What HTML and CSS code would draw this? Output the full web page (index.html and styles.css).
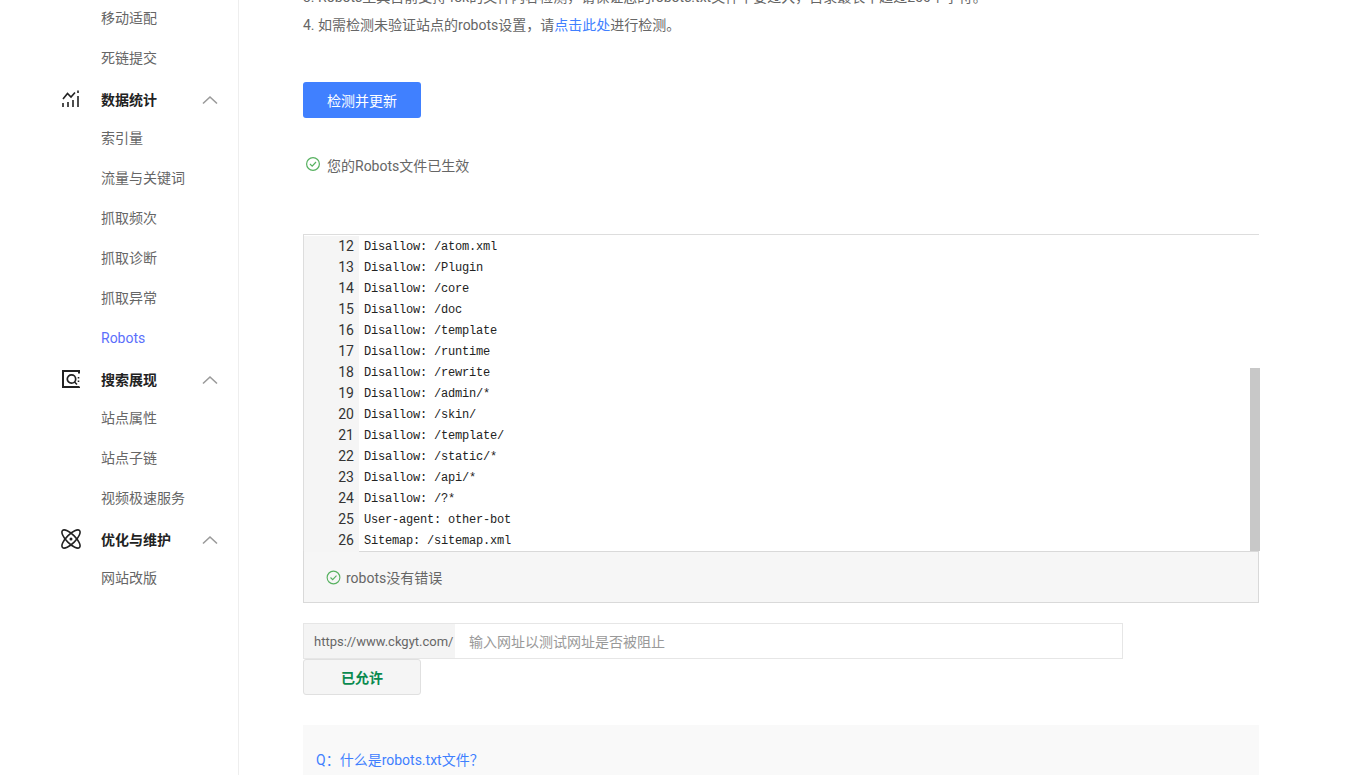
FILE: index.html
```html
<!DOCTYPE html>
<html lang="zh-CN">
<head>
<meta charset="utf-8">
<title>Robots</title>
<link rel="stylesheet" href="styles.css">
</head>
<body>
<div class="page">
  <aside class="sidebar">
    <a class="item">移动适配</a>
    <a class="item">死链提交</a>
    <div class="group">
      <svg class="gicon" width="20" height="20" viewBox="0 0 20 20" fill="none" stroke="#222" stroke-width="1.6"><path d="M2 10 6.500 4.500 10 8l4-4.500"/><path d="M2 18v-4M7 18v-5M12 18v-7M17 18V7M17 4V1.500"/></svg>
      <span class="gname">数据统计</span>
      <svg class="chev" width="16" height="10" viewBox="0 0 16 10" fill="none" stroke="#9a9a9a" stroke-width="1.6"><path d="M1 8.500 8 2l7 6.500"/></svg>
    </div>
    <a class="item">索引量</a>
    <a class="item">流量与关键词</a>
    <a class="item">抓取频次</a>
    <a class="item">抓取诊断</a>
    <a class="item">抓取异常</a>
    <a class="item active">Robots</a>
    <div class="group">
      <svg class="gicon" width="20" height="20" viewBox="0 0 20 20" fill="none" stroke="#222" stroke-width="2"><path d="M18 4.500V2H2v16h16v-.5"/><circle cx="10.500" cy="10" r="4.200" stroke-width="1.700"/><path d="m13.500 13 2.500 2.500M17.500 8v1.500M17.500 11.500V13" stroke-width="1.600"/></svg>
      <span class="gname">搜索展现</span>
      <svg class="chev" width="16" height="10" viewBox="0 0 16 10" fill="none" stroke="#9a9a9a" stroke-width="1.6"><path d="M1 8.500 8 2l7 6.500"/></svg>
    </div>
    <a class="item">站点属性</a>
    <a class="item">站点子链</a>
    <a class="item">视频极速服务</a>
    <div class="group">
      <svg class="gicon" width="20" height="20" viewBox="0 0 20 20" fill="none" stroke="#222" stroke-width="1.600"><ellipse cx="10" cy="10" rx="4.500" ry="12" transform="rotate(45 10 10)"/><ellipse cx="10" cy="10" rx="4.500" ry="12" transform="rotate(-45 10 10)"/><circle cx="10" cy="10" r="1.500" fill="#222" stroke="none"/></svg>
      <span class="gname">优化与维护</span>
      <svg class="chev" width="16" height="10" viewBox="0 0 16 10" fill="none" stroke="#9a9a9a" stroke-width="1.6"><path d="M1 8.500 8 2l7 6.500"/></svg>
    </div>
    <a class="item">网站改版</a>
  </aside>
  <main class="main">
    <p class="note">3. Robots工具目前支持48k的文件内容检测，请保证您的robots.txt文件不要过大，目录最长不超过250个字符。</p>
    <p class="note">4. 如需检测未验证站点的robots设置，请<a class="link">点击此处</a>进行检测。</p>
    <button class="primary">检测并更新</button>
    <div class="status">
      <svg width="16" height="16" viewBox="0 0 16 16" fill="none" stroke="#57b160" stroke-width="1.200"><circle cx="8" cy="8" r="6.400"/><path d="m5 8 2.200 2.200L11 6"/></svg>
      <span>您的Robots文件已生效</span>
    </div>
    <section class="editor">
      <div class="code">
        <div class="gutter">
          <div>12</div><div>13</div><div>14</div><div>15</div><div>16</div><div>17</div><div>18</div><div>19</div><div>20</div><div>21</div><div>22</div><div>23</div><div>24</div><div>25</div><div>26</div>
        </div>
        <pre class="lines">Disallow: /atom.xml
Disallow: /Plugin
Disallow: /core
Disallow: /doc
Disallow: /template
Disallow: /runtime
Disallow: /rewrite
Disallow: /admin/*
Disallow: /skin/
Disallow: /template/
Disallow: /static/*
Disallow: /api/*
Disallow: /?*
User-agent: other-bot
Sitemap: /sitemap.xml</pre>
        <div class="thumb"></div>
      </div>
      <div class="result">
        <svg width="15" height="15" viewBox="0 0 16 16" fill="none" stroke="#57b160" stroke-width="1.200"><circle cx="8" cy="8" r="6.800"/><path d="m4.800 8 2.300 2.300L11.200 6"/></svg>
        <span>robots没有错误</span>
      </div>
    </section>
    <div class="urlrow">
      <span class="prefix">https://www.ckgyt.com/</span>
      <span class="placeholder">输入网址以测试网址是否被阻止</span>
    </div>
    <button class="allowed">已允许</button>
    <section class="faq">
      <a class="q">Q：什么是robots.txt文件？</a>
    </section>
  </main>
</div>
</body>
</html>
```
FILE: styles.css
```css
* { box-sizing: border-box; }
html, body { margin: 0; height: 775px; overflow: hidden; background: #fff; }
body { font-family: Roboto, "Noto Sans CJK SC", sans-serif; font-size: 14px; color: #666; }
.page { display: flex; height: 775px; }
.sidebar { width: 239px; flex: none; border-right: 1px solid #eee; margin-top: -2px; height: 777px; }
.item { display: block; height: 40px; line-height: 40px; padding-left: 101px; color: #666; }
.item.active { color: #5b6ffb; }
.group { display: flex; align-items: center; height: 40px; padding-top: 2px; padding-left: 61px; color: #222; }
.gicon { flex: none; margin-right: 20px; }
.gname { font-weight: 700; font-size: 14px; flex: 1; }
.chev { flex: none; margin-right: 20px; margin-top: 2px; }
.main { width: 956px; margin-left: 64px; flex: none; }
.note { margin: 0; height: 28px; line-height: 28px; white-space: nowrap; }
.note:first-child { margin-top: -17px; }
.link { color: #4080ff; }
.primary { display: block; width: 118px; height: 36px; margin-top: 43px; border: 0; border-radius: 3px; background: #4080ff; color: #fff; font: inherit; }
.status { display: flex; align-items: center; gap: 6px; margin-top: 36px; height: 22px; }
.status svg { margin-left: 2px; margin-top: -3px; }
.editor { margin-top: 58px; width: 956px; }
.code { position: relative; display: flex; height: 317px; border-top: 1px solid #ddd; border-left: 1px solid #ddd; padding-top: 1px; }
.gutter { width: 55px; background: #f5f5f5; color: #333; text-align: right; padding-right: 5px; font-size: 14px; line-height: 21px; height: 316px; }
.lines { margin: 0; padding: 1px 0 0 5px; font-family: "Liberation Mono", monospace; font-size: 12px; letter-spacing: -0.2px; line-height: 21px; color: #222; }
.thumb { position: absolute; right: -1px; bottom: 0; width: 10px; height: 183px; background: #c8c8c8; }
.result { display: flex; align-items: center; gap: 5px; height: 52px; padding-left: 22px; background: #f6f6f6; border: 1px solid #d9d9d9; }
.urlrow { display: flex; align-items: center; margin-top: 20px; width: 820px; height: 36px; border: 1px solid #e6e6e6; }
.prefix { display: flex; align-items: center; height: 100%; width: 151px; flex: none; padding-left: 10px; background: #f4f4f4; font-size: 13px; white-space: nowrap; }
.placeholder { padding-left: 14px; color: #999; }
.allowed { display: block; width: 118px; height: 36px; border: 1px solid #e0e0e0; border-radius: 3px; background: #f5f5f5; color: #0a8a4f; font: inherit; font-weight: 700; font-size: 14px; }
.faq { margin-top: 30px; height: 60px; padding: 25px 13px 0; background: #f9f9f9; }
.q { color: #4080ff; line-height: 20px; }
```
